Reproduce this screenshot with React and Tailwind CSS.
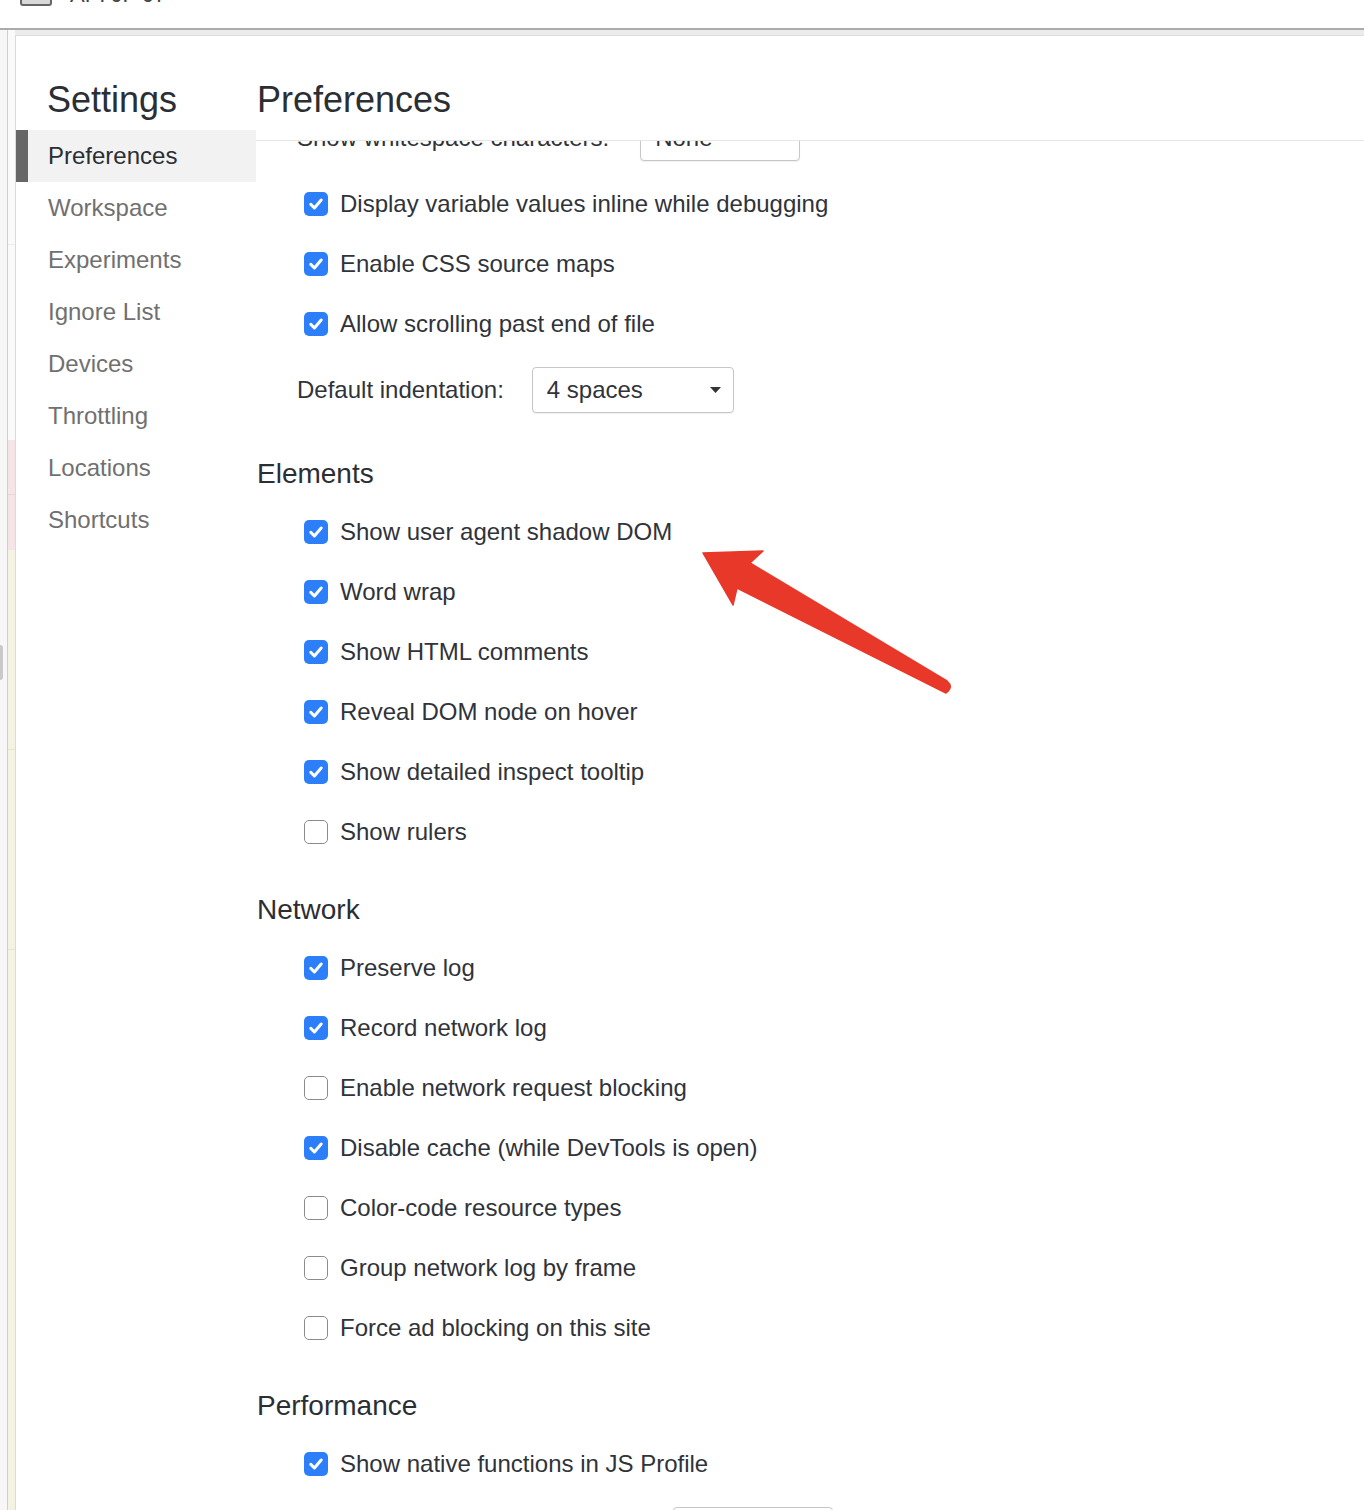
import React from "react";

const navItems = ["Preferences", "Workspace", "Experiments", "Ignore List", "Devices", "Throttling", "Locations", "Shortcuts"];

const sections = [
  {
    title: "Elements",
    rows: [
      ["Show user agent shadow DOM", true],
      ["Word wrap", true],
      ["Show HTML comments", true],
      ["Reveal DOM node on hover", true],
      ["Show detailed inspect tooltip", true],
      ["Show rulers", false],
    ],
  },
  {
    title: "Network",
    rows: [
      ["Preserve log", true],
      ["Record network log", true],
      ["Enable network request blocking", false],
      ["Disable cache (while DevTools is open)", true],
      ["Color-code resource types", false],
      ["Group network log by frame", false],
      ["Force ad blocking on this site", false],
    ],
  },
];

const Checkbox = ({ checked }) =>
  checked ? (
    <span className="w-6 h-6 shrink-0 rounded-[5px] bg-[#2d7ff9] flex items-center justify-center">
      <svg width="18" height="18" viewBox="0 0 18 18">
        <path d="M3.8 9.4 L7.4 13 L14.2 5" stroke="white" strokeWidth="3" fill="none" strokeLinecap="round" strokeLinejoin="round" />
      </svg>
    </span>
  ) : (
    <span className="w-6 h-6 shrink-0 rounded-[5px] border-[1.5px] border-[#8c8c8c] bg-white" />
  );

const CheckRow = ({ label, checked }) => (
  <div className="h-[60px] flex items-center gap-3 pl-[48px]">
    <Checkbox checked={checked} />
    <span>{label}</span>
  </div>
);

const SelectRow = ({ label, value, width, gap }) => (
  <div className={`h-[72px] flex items-center ${gap} pl-[41px]`}>
    <span>{label}</span>
    <div
      className={`h-[46px] ${width} border border-[#c6c6c6] rounded-[4px] bg-white shadow-[0_1px_1px_rgba(0,0,0,0.06)] flex items-center justify-between pl-[14px] pr-[12px]`}
    >
      <span>{value}</span>
      <svg width="11" height="6" viewBox="0 0 11 6">
        <path d="M0 0 L11 0 L5.5 6 Z" fill="#333" />
      </svg>
    </div>
  </div>
);

const Heading = ({ children }) => (
  <div className="mt-[30px] mb-[10px] h-[36px] flex items-center pl-px text-[28px] leading-none text-[#2b2e33]">{children}</div>
);

export default function App() {
  return (
    <div className="w-[1364px] h-[1510px] overflow-hidden bg-white font-['Liberation_Sans',Arial,sans-serif] text-[24px] text-[#30333a] relative">
      {/* window strip above the panel */}
      <div className="h-[28px] overflow-hidden">
        <div className="flex items-start pl-[20px] -mt-[16px]">
          <div className="w-[32px] h-[22px] border-2 border-[#666] rounded-[3px] bg-[#d9d9d9]" />
          <span className="ml-[18px] text-[22px] leading-[22px] text-[#444]">API JP J7</span>
        </div>
      </div>
      <div className="h-[2px] bg-[#ababab]" />

      <div className="flex h-[1480px]">
        {/* underlying page edge */}
        <div className="w-[8px] bg-[#f7f7f7] border-r border-[#cfcfcf] flex flex-col">
          <div className="mt-[615px] h-[35px] w-[3px] rounded-r bg-[#c9c9c9]" />
        </div>
        <div className="w-[7px] flex flex-col">
          <div className="h-[215px] bg-[#fafafa] border-b border-[#ececec]" />
          <div className="h-[195px] bg-[#fafafa]" />
          <div className="h-[55px] bg-[#f6e5e7] border-b border-[#ecd3d7]" />
          <div className="h-[55px] bg-[#f6e5e7]" />
          <div className="h-[200px] bg-[#f4f2e2] border-b border-[#e9e6c8]" />
          <div className="h-[200px] bg-[#f4f2e2] border-b border-[#e9e6c8]" />
          <div className="flex-1 bg-[#f4f2e2]" />
        </div>

        <div className="flex-1 flex flex-col">
          <div className="h-[6px] bg-[#ebebeb] border-b border-[#dedede]" />

          {/* settings panel */}
          <div className="flex-1 flex border-l border-[#dadada] overflow-hidden">
            <div className="w-[240px] shrink-0">
              <div className="h-[94px] pt-[46px] pl-[31px] text-[36px] leading-[36px] text-[#2b2e33]">Settings</div>
              {navItems.map((item, i) =>
                i === 0 ? (
                  <div key={item} className="h-[52px] flex items-center bg-[#f2f2f2] border-l-[12px] border-[#666] pl-[20px] text-[#2b2e33]">
                    {item}
                  </div>
                ) : (
                  <div key={item} className="h-[52px] flex items-center pl-[32px] text-[#707070]">
                    {item}
                  </div>
                )
              )}
            </div>

            <div className="flex-1 flex flex-col">
              <div className="h-[105px] shrink-0 pt-[46px] pl-px text-[36px] leading-[36px] text-[#2b2e33] border-b border-[#e6e6e6]">
                Preferences
              </div>
              <div className="flex-1 overflow-hidden">
                <div className="-mt-[39px]">
                  <SelectRow label="Show whitespace characters:" value="None" width="w-[160px]" gap="gap-[31px]" />
                  <CheckRow label="Display variable values inline while debugging" checked />
                  <CheckRow label="Enable CSS source maps" checked />
                  <CheckRow label="Allow scrolling past end of file" checked />
                  <SelectRow label="Default indentation:" value="4 spaces" width="w-[202px]" gap="gap-[28px]" />

                  {sections.map((s) => (
                    <div key={s.title}>
                      <Heading>{s.title}</Heading>
                      {s.rows.map(([label, checked]) => (
                        <CheckRow key={label} label={label} checked={checked} />
                      ))}
                    </div>
                  ))}

                  <Heading>Performance</Heading>
                  <CheckRow label="Show native functions in JS Profile" checked />
                  <SelectRow label="Flamechart mouse wheel action:" value="Scroll" width="w-[160px]" gap="gap-[30px]" />
                </div>
              </div>
            </div>
          </div>
        </div>
      </div>

      {/* red annotation arrow */}
      <svg className="absolute left-0 top-0 pointer-events-none" width="1364" height="1510">
        <path
          d="M703 553 L763 551 L750 563 L947 681 Q954 687 946 693 L737 588 L733 605 Z"
          fill="#e8382a"
          stroke="#e8382a"
          strokeWidth="1.5"
          strokeLinejoin="round"
        />
      </svg>
    </div>
  );
}
